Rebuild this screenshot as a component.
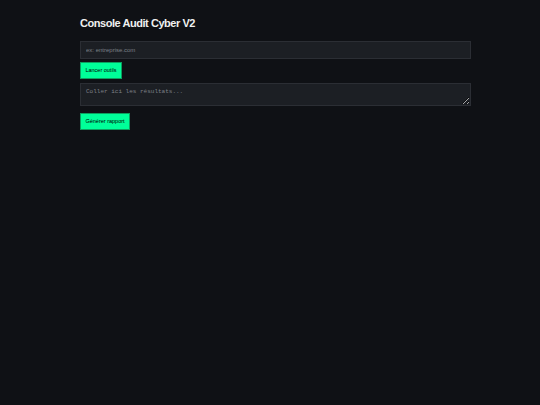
export default function App() {
  return (
    <div className="min-h-[405px] w-full bg-[#0f1115] px-[80px] pt-[16px] text-[#e8e8e8]" style={{ fontFamily: "'Liberation Sans', Arial, sans-serif" }}>
      <div className="w-[391px]">
        <h1 className="text-[11px] font-bold leading-[14px] tracking-[-0.45px] text-[#f0f0f0]">Console Audit Cyber V2</h1>
        <input
          className="mt-[11px] block h-[18px] w-full border border-[#2b2e34] bg-[#1c1f24] px-[5px] text-[6px] text-[#ccc] outline-none placeholder:text-[#7d8088]"
          placeholder="ex: entreprise.com"
        />
        <button className="mt-[3px] block h-[17px] w-[42px] border border-[#0c9f5f] bg-[#00ff99] text-[5.5px] text-black">
          Lancer outils
        </button>
        <textarea
          className="mt-[4px] block h-[23px] w-full resize-y border border-[#2b2e34] bg-[#1c1f24] px-[5px] py-[4px] text-[6px] leading-[8px] text-[#ccc] outline-none placeholder:text-[#7d8088]"
          style={{ fontFamily: "'Liberation Mono', monospace" }}
          placeholder="Coller ici les résultats..."
        />
        <button className="mt-[7px] block h-[17px] w-[50px] border border-[#0c9f5f] bg-[#00ff99] text-[5.5px] text-black">
          Générer rapport
        </button>
      </div>
    </div>
  );
}
